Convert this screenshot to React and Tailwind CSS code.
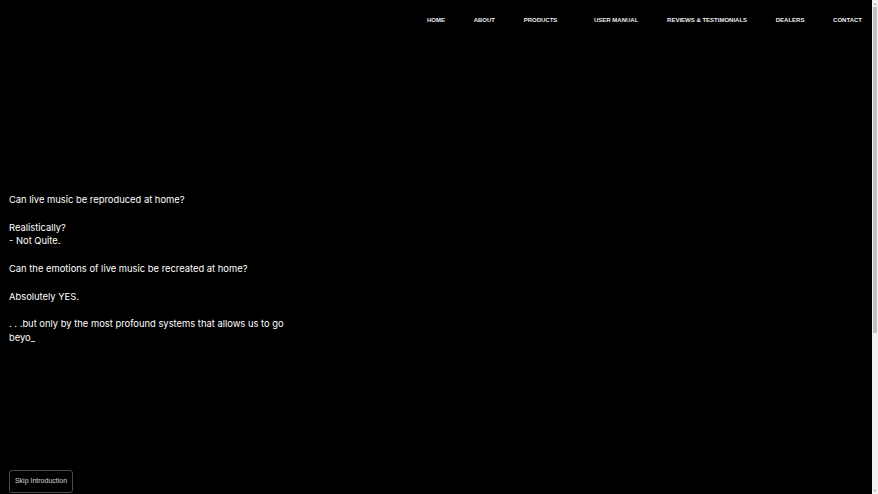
const navItems = [
  { label: 'HOME' },
  { label: 'ABOUT' },
  { label: 'PRODUCTS', extra: true },
  { label: 'USER MANUAL' },
  { label: 'REVIEWS & TESTIMONIALS' },
  { label: 'DEALERS' },
  { label: 'CONTACT' },
];

const introLines = [
  'Can live music be reproduced at home?',
  '',
  'Realistically?',
  '- Not Quite.',
  '',
  'Can the emotions of live music be recreated at home?',
  '',
  'Absolutely YES.',
  '',
  '. . .but only by the most profound systems that allows us to go',
  'beyo_',
];

function Scrollbar() {
  return (
    <div className="flex h-full w-[6px] shrink-0 flex-col bg-[#f1f1f1]">
      <div className="flex h-[7px] items-center justify-center text-[4px] leading-none text-[#a3a3a3]">
        ▲
      </div>
      <div className="mx-auto h-[326px] w-[4px] bg-[#c1c1c1]" />
      <div className="flex-1" />
      <div className="flex h-[7px] items-center justify-center text-[4px] leading-none text-[#a3a3a3]">
        ▼
      </div>
    </div>
  );
}

export default function App() {
  return (
    <div className="flex h-[494px] w-[878px] overflow-hidden bg-black">
      <div className="flex h-full flex-1 flex-col">
        {/* top navigation */}
        <nav className="flex h-[40px] items-center justify-end pr-[10px] font-['Liberation_Sans',Arial,sans-serif] text-[6px] font-bold text-[#ececec]">
          <ul className="flex items-center gap-[28.7px]">
            {navItems.map((item) => (
              <li key={item.label} className={item.extra ? 'mr-[8px]' : ''}>
                {item.label}
              </li>
            ))}
          </ul>
        </nav>

        {/* typed intro */}
        <div className="flex-1 pl-[9px] pt-[153px]">
          <div className="font-['Inter',sans-serif] text-[9.4px] leading-[13.8px] text-white">
            {introLines.map((line, i) => (
              <p key={i} className="h-[13.8px]">
                {line}
              </p>
            ))}
          </div>
        </div>

        <div className="pb-px pl-[9px]">
          <button className="h-[23px] w-[64px] rounded-[3px] border border-[#4a4a4a] bg-black font-['Liberation_Sans',Arial,sans-serif] text-[7px] text-[#d6d6d6]">
            Skip Introduction
          </button>
        </div>
      </div>
      <Scrollbar />
    </div>
  );
}
